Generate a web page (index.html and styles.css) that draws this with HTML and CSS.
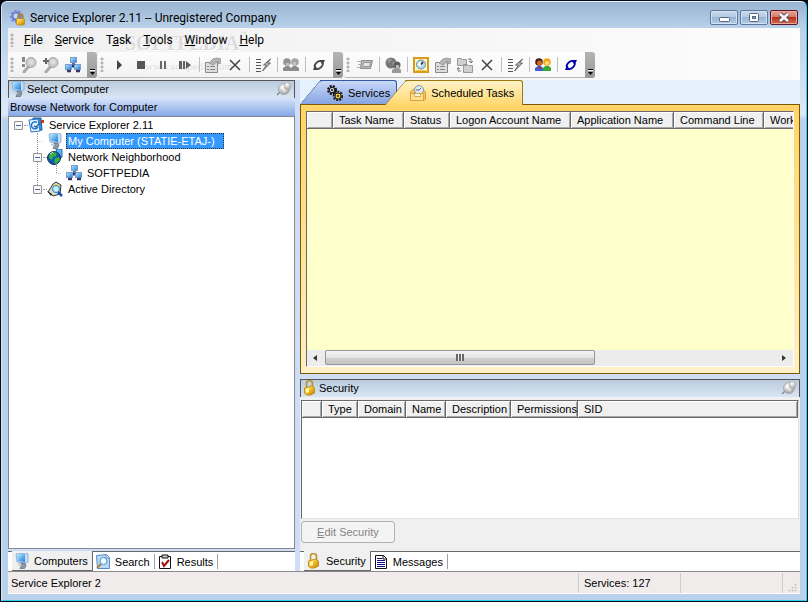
FILE: index.html
```
<!DOCTYPE html>
<html lang="en">
<head>
	<meta charset="utf-8">
	<title>Service Explorer 2.11 -- Unregistered Company</title>
	<link rel="stylesheet" href="styles.css">
</head>
<body>
<!-- icon sprite -->
<svg class="sprite" aria-hidden="true">
	<defs>
		<linearGradient id="gold" x1="0" y1="0" x2="1" y2="1"><stop offset="0" stop-color="#fff3a0"/><stop offset="0.5" stop-color="#f0bc28"/><stop offset="1" stop-color="#b87a08"/></linearGradient>
		<linearGradient id="screen" x1="0" y1="0" x2="1" y2="1"><stop offset="0" stop-color="#b8ecff"/><stop offset="1" stop-color="#1c7ce0"/></linearGradient>
		<radialGradient id="silver" cx="0.4" cy="0.3" r="0.7"><stop offset="0" stop-color="#fff"/><stop offset="1" stop-color="#a4a4a4"/></radialGradient>
	</defs>
	<symbol id="i-app" viewBox="0 0 16 16">
		<circle cx="6.500" cy="6.500" r="5" fill="#6c7cd0" stroke="#7484d4" stroke-width="3" stroke-dasharray="2 1.500"/><circle cx="6" cy="6" r="2.500" fill="#c9d4f5"/>
		<path d="M8 9V6.500a2.500 2.500 0 0 1 5 0V9" fill="none" stroke="#b08820" stroke-width="1.500"/><rect x="6.500" y="8.500" width="8" height="6.500" rx="1.500" fill="url(#gold)" stroke="#c09020"/>
	</symbol>
	<symbol id="i-computer" viewBox="0 0 16 16">
		<path d="M2 1l10-1 2 1v8l-3 1.500L3 9z" fill="#c5dcf4" stroke="#7fa4d0" stroke-width=".8"/><path d="M3 1.500l8-.5v8L4 8z" fill="url(#screen)"/><path d="M7 10h4l1 3-2 3H6l1-3z" fill="#8c97a5" stroke="#5d6b80" stroke-width=".7"/><path d="M4 10.500l4 1-1 2-3-1z" fill="#c7d0da"/>
	</symbol>
	<symbol id="i-network" viewBox="0 0 16 16">
		<path d="M8 5v4M4 11l4-2 4 2" stroke="#263a78" stroke-width="2" fill="none"/>
		<rect x="5.500" y=".5" width="6" height="5" fill="url(#screen)" stroke="#7f9cc4"/><rect x=".5" y="7.500" width="6" height="5" fill="url(#screen)" stroke="#7f9cc4"/><rect x="9.500" y="7.500" width="6" height="5" fill="url(#screen)" stroke="#7f9cc4"/>
		<path d="M2 14h4M11 14h4" stroke="#3b3468" stroke-width="2.500"/><path d="M7 6h3v2H7z" fill="#5c6cb0"/>
	</symbol>
	<symbol id="i-book" viewBox="0 0 16 16">
		<path d="M5 1h8l1 12-8 1z" fill="#2f8fe0" stroke="#1b5ba8"/><path d="M1 3l9-1 2 12-9 1z" fill="#e8f4ff" stroke="#2878c8"/><path d="M9 5.500a3.500 3.500 0 1 0 1 4.500" fill="none" stroke="#1c74d0" stroke-width="1.500"/><path d="M6 9l2 1 6-6" fill="none" stroke="#2c6cb0" stroke-width="1.500"/><path d="M13 3h3v3h-3z" fill="#d03818"/>
	</symbol>
	<symbol id="i-globe" viewBox="0 0 16 16">
		<path d="M9 0h6v8l-4 3z" fill="#58b4f4" stroke="#2c6ca8"/><circle cx="7" cy="9" r="6.500" fill="#1557a8" stroke="#0c2f66"/><path d="M2 6l4-3 4 1-1 3-3 1-1 3-3-2zM8 9l4-1 1 3-4 4-2-2z" fill="#35b045"/><path d="M3 5l3-2" stroke="#c8f4d0"/>
	</symbol>
	<symbol id="i-directory" viewBox="0 0 16 16">
		<path d="M1 11l5-8 3-2 5 3-1 9-7 2z" fill="#d8d8cc" stroke="#333"/><path d="M6 4l5-1 2 2-6 2z" fill="#f2d34d"/><path d="M0 10l5 3-1 2z" fill="#222"/><circle cx="9" cy="8" r="3.500" fill="#c9f0ff" stroke="#2280b8"/><path d="M11 11l4 4" stroke="#1c4fb0" stroke-width="2.500"/>
	</symbol>
	<symbol id="i-find" viewBox="0 0 16 16">
		<path d="M8 9l-5 6" stroke="#aaa" stroke-width="3" stroke-linecap="round"/><circle cx="10" cy="5.500" r="5" fill="#c9c9c9" stroke="#a4a4a4"/><circle cx="10" cy="5" r="2.500" fill="#dedede"/><path d="M2.500 0v5M2.500 7v3" stroke="#8a8a8a" stroke-width="3"/>
	</symbol>
	<symbol id="i-findadd" viewBox="0 0 16 16">
		<path d="M8 9l-5 6" stroke="#aaa" stroke-width="3" stroke-linecap="round"/><circle cx="10" cy="5.500" r="5" fill="#c9c9c9" stroke="#a4a4a4"/><circle cx="10" cy="5" r="2.500" fill="#dedede"/><path d="M0 4h6M3 1v6" stroke="#666" stroke-width="2"/>
	</symbol>
	<symbol id="i-play" viewBox="0 0 16 16"><path d="M6 3l5 5-5 5z" fill="#444"/></symbol>
	<symbol id="i-stop" viewBox="0 0 16 16"><path d="M4 4h8v8H4z" fill="#555"/></symbol>
	<symbol id="i-pause" viewBox="0 0 16 16"><path d="M5 4h2v8H5zM9 4h2v8H9z" fill="#686868"/></symbol>
	<symbol id="i-step" viewBox="0 0 16 16"><path d="M2 4h3v8H2zM6 4h2v8H6zM9 4l5 4-5 4z" fill="#606060"/></symbol>
	<symbol id="i-props" viewBox="0 0 16 16">
		<path d="M.5 5.500h12v10H.5z" fill="#dedede" stroke="#8a8a8a"/><path d="M2 9.500h2M5 9.500h5M2 12.500h2M5 12.500h5" stroke="#888"/><path d="M4 6l4-4 4-1 4 1v4l-3 1V4L8 8z" fill="#b4b4b4" stroke="#909090" stroke-width=".8"/>
	</symbol>
	<symbol id="i-delete" viewBox="0 0 16 16"><path d="M3 3l10 10M13 3L3 13" stroke="#444" stroke-width="1.500"/></symbol>
	<symbol id="i-bolt" viewBox="0 0 16 16">
		<path d="M1 2.500h5M1 5.500h5M1 8.500h5M1 11.500h5M1 14.500h5" stroke="#555"/><path d="M15.500 2l-7 6h3l-4 6 8-8h-3z" fill="#bbb" stroke="#666"/>
	</symbol>
	<symbol id="i-users-off" viewBox="0 0 16 16">
		<circle cx="4" cy="5" r="3.800" fill="#929292"/><circle cx="12" cy="5" r="3.800" fill="#a4a4a4"/><path d="M0 14v-3l3-2h3l2 2 2-2h3l3 2v3z" fill="#8c8c8c"/><path d="M3 6h3v3H3zM10 5h3v3h-3z" fill="#c0c0c0"/>
	</symbol>
	<symbol id="i-users" viewBox="0 0 16 16">
		<circle cx="4" cy="5" r="3.800" fill="#442018"/><circle cx="4.500" cy="6" r="2.500" fill="#d86820"/><circle cx="12" cy="5" r="3.800" fill="#f0a818"/><circle cx="12" cy="6" r="2" fill="#ffdc80"/><path d="M0 14v-3l3-2h3l2 2v3z" fill="#3864d8"/><path d="M8 14v-3l2-2h4l2 2v3z" fill="#38a830"/><path d="M3 10h3l-1 3z" fill="#d02020"/>
	</symbol>
	<symbol id="i-refresh" viewBox="0 0 16 16">
		<path d="M4 10.500c-1.500-3 3-7 6-6.500M11.500 5.500c1.500 3-3 7-6 6.500" fill="none" stroke="currentColor" stroke-width="1.800"/><path d="M8.500 3H14l-2.500 5zM7 13H2l2-5z" fill="currentColor"/><path d="M6 9.500l3.500-3" stroke="#fff"/>
	</symbol>
	<symbol id="i-run" viewBox="0 0 16 16">
		<path d="M4.500 3.500h11l-2 8h-10z" fill="#bbb" stroke="#8c8c8c"/><path d="M6.500 5.500h7l-1 4h-7z" fill="#e4e4e4" stroke="#999"/><path d="M0 4.500h4M1 7.500h3M0 10.500h3" stroke="#b0b0b0"/>
	</symbol>
	<symbol id="i-world-off" viewBox="0 0 16 16">
		<circle cx="6" cy="6" r="5.500" fill="#777"/><path d="M2 4l3-3 2 2-3 3zM7 6l3-2 1 3-3 2z" fill="#999"/><circle cx="12" cy="8" r="3.500" fill="#606060"/><path d="M7 16v-3l3-2h4l2 2v3z" fill="#999"/><path d="M11 8h3v3h-3z" fill="#bbb"/>
	</symbol>
	<symbol id="i-schedule" viewBox="0 0 16 16">
		<rect x="1" y="1" width="14" height="14" fill="#fff8cc" stroke="#d89c18" stroke-width="2"/><circle cx="8" cy="7.500" r="4.500" fill="#b8dcec" stroke="#6c8ca4"/><circle cx="7" cy="7" r="2" fill="#fff"/><path d="M8 7.500l2-2.500" stroke="#223" stroke-width="1.500"/><path d="M3 13.500h10" stroke="#f4ca48"/>
	</symbol>
	<symbol id="i-copy-off" viewBox="0 0 16 16">
		<path d="M.5 1.500h4l1 1h4v6h-9zM6.500 7.500h4l1 1h4v7h-9z" fill="#d0d0d0" stroke="#999"/><path d="M11 2h3v3M12 4l2 2 2-2M4 14h-3v-3M0 12l1-1.500 2 1.500" fill="none" stroke="#777"/>
	</symbol>
	<symbol id="i-gears" viewBox="0 0 16 16">
		<circle cx="5" cy="5" r="3.500" fill="none" stroke="#111" stroke-width="3" stroke-dasharray="1.800 1"/><circle cx="5" cy="5" r="2.800" fill="#ccc" stroke="#111"/><circle cx="5" cy="5" r="1" fill="#111"/><circle cx="11" cy="11" r="3.800" fill="none" stroke="#222" stroke-width="3" stroke-dasharray="1.800 1"/><circle cx="11" cy="11" r="3" fill="#f0cc30" stroke="#222"/><circle cx="11" cy="11" r="1" fill="#222"/>
	</symbol>
	<symbol id="i-task" viewBox="0 0 16 16">
		<path d="M.5 7l3-3h9l3 3v7l-2 1.500H.5z" fill="#f6c450" stroke="#d89c38"/><circle cx="9" cy="5" r="4.500" fill="#dceaf2" stroke="#8098a8"/><path d="M9 5l2-2M9 5H6" stroke="#667"/><path d="M.5 8.500h13v7H.5z" fill="#ffe090" stroke="#d8a040"/><path d="M4.500 8.500h6v3h-6z" fill="#fffbe0" stroke="#c89840" stroke-width=".8"/>
	</symbol>
	<symbol id="i-lock" viewBox="0 0 16 16">
		<path d="M4.500 8V4a3 3 0 0 1 6-1v4" fill="none" stroke="#b8942c" stroke-width="1.600"/><path d="M2.500 8l7-2 3 2v5l-4 2h-4l-2-2z" fill="url(#gold)" stroke="#c48e1c"/><path d="M4 9l3-1v4l-3 1z" fill="#fff4a8"/>
	</symbol>
	<symbol id="i-pin" viewBox="0 0 16 16">
		<path d="M5 10l-4 4" stroke="#888" stroke-width="1.500"/><circle cx="8" cy="8" r="5.500" fill="url(#silver)" stroke="#a0a0a0" stroke-width=".8"/><circle cx="11.500" cy="5" r="3.500" fill="url(#silver)" stroke="#b0b0b0" stroke-width=".6"/><path d="M5 7c2 0 4 1 4 4" stroke="#fff" fill="none"/>
	</symbol>
	<symbol id="i-search" viewBox="0 0 16 16">
		<path d="M1.500 1.500l10-1 3 3v11h-12z" fill="#b8d8f6" stroke="#5c8cc0"/><path d="M11 1v3h3" fill="#fff" stroke="#5c8cc0"/><circle cx="8.500" cy="7" r="3.500" fill="#f2fbff" stroke="#4895d0"/><path d="M6 10l-4 4" stroke="#a88440" stroke-width="2"/>
	</symbol>
	<symbol id="i-results" viewBox="0 0 16 16">
		<path d="M2.500 2.500h11v12h-11z" fill="#fff" stroke="#111"/><path d="M5 1h6v3H5z" fill="#ccc" stroke="#111"/><path d="M5 8l2 4 5-6" fill="none" stroke="#a01010" stroke-width="2"/>
	</symbol>
	<symbol id="i-messages" viewBox="0 0 16 16">
		<path d="M2.500 1.500h8l3 3v10h-11z" fill="#fff" stroke="#111"/><path d="M10 1v4h4" fill="none" stroke="#111"/><path d="M4 4.500h5M4 6.500h8M4 8.500h8M4 10.500h8M4 12.500h8" stroke="#101090"/>
	</symbol>
</svg>

<div class="window">
	<header class="titlebar">
		<svg class="icon"><use href="#i-app"/></svg>
		<h1>Service Explorer 2.11 -- Unregistered Company</h1>
		<div class="captions">
			<button class="caption" aria-label="Minimize"><svg viewBox="0 0 26 13"><rect x="8.500" y="6.500" width="10" height="4" rx="1" fill="#fff" stroke="#56657c"/></svg></button>
			<button class="caption" aria-label="Maximize"><svg viewBox="0 0 26 13"><rect x="8.500" y="2.500" width="9" height="8" rx="1" fill="#fff" stroke="#56657c"/><rect x="11.500" y="5.500" width="3" height="2" fill="#8ea9c8" stroke="#56657c"/></svg></button>
			<button class="caption close" aria-label="Close"><svg viewBox="0 0 26 13"><path d="M9 3l8 7M17 3l-8 7" stroke="#5b4a58" stroke-width="4.500"/><path d="M9 3l8 7M17 3l-8 7" stroke="#fff" stroke-width="2.600"/></svg></button>
		</div>
	</header>

	<div class="bars">
		<div class="watermark" aria-hidden="true"><b>SOFTPEDIA<sup>™</sup></b><span>www.softpedia.com</span></div>
		<nav class="menu">
			<i class="grip"></i>
			<button><u>F</u>ile</button>
			<button><u>S</u>ervice</button>
			<button>T<u>a</u>sk</button>
			<button><u>T</u>ools</button>
			<button><u>W</u>indow</button>
			<button><u>H</u>elp</button>
		</nav>
		<div class="toolbars">
			<div class="toolbar">
				<i class="grip"></i>
				<button class="tool" aria-label="Find"><svg class="icon"><use href="#i-find"/></svg></button>
				<button class="tool" aria-label="Add"><svg class="icon"><use href="#i-findadd"/></svg></button>
				<button class="tool" aria-label="Network"><svg class="icon"><use href="#i-network"/></svg></button>
				<button class="more" aria-label="More"></button>
			</div>
			<div class="toolbar">
				<i class="grip"></i>
				<button class="tool" aria-label="Start"><svg class="icon"><use href="#i-play"/></svg></button>
				<button class="tool" aria-label="Stop"><svg class="icon"><use href="#i-stop"/></svg></button>
				<button class="tool" aria-label="Pause"><svg class="icon"><use href="#i-pause"/></svg></button>
				<button class="tool" aria-label="Restart"><svg class="icon"><use href="#i-step"/></svg></button>
				<i class="sep"></i>
				<button class="tool" aria-label="Properties"><svg class="icon"><use href="#i-props"/></svg></button>
				<button class="tool" aria-label="Delete"><svg class="icon"><use href="#i-delete"/></svg></button>
				<i class="sep"></i>
				<button class="tool" aria-label="Actions"><svg class="icon"><use href="#i-bolt"/></svg></button>
				<i class="sep"></i>
				<button class="tool" aria-label="Accounts"><svg class="icon"><use href="#i-users-off"/></svg></button>
				<i class="sep"></i>
				<button class="tool" aria-label="Refresh"><svg class="icon"><use href="#i-refresh"/></svg></button>
				<button class="more" aria-label="More"></button>
			</div>
			<div class="toolbar">
				<i class="grip"></i>
				<button class="tool" aria-label="Run"><svg class="icon"><use href="#i-run"/></svg></button>
				<i class="sep"></i>
				<button class="tool" aria-label="Connect"><svg class="icon"><use href="#i-world-off"/></svg></button>
				<i class="sep"></i>
				<button class="tool" aria-label="Schedule"><svg class="icon"><use href="#i-schedule"/></svg></button>
				<button class="tool" aria-label="Task properties"><svg class="icon"><use href="#i-props"/></svg></button>
				<button class="tool" aria-label="Copy task"><svg class="icon"><use href="#i-copy-off"/></svg></button>
				<button class="tool" aria-label="Delete task"><svg class="icon"><use href="#i-delete"/></svg></button>
				<i class="sep"></i>
				<button class="tool" aria-label="Task actions"><svg class="icon"><use href="#i-bolt"/></svg></button>
				<i class="sep"></i>
				<button class="tool" aria-label="Task accounts"><svg class="icon"><use href="#i-users"/></svg></button>
				<i class="sep"></i>
				<button class="tool blue" aria-label="Refresh tasks"><svg class="icon"><use href="#i-refresh"/></svg></button>
				<button class="more" aria-label="More"></button>
			</div>
		</div>
	</div>

	<main class="workspace">
		<section class="side">
			<div class="pane-head">
				<svg class="icon"><use href="#i-computer"/></svg>
				<h2>Select Computer</h2>
				<button class="pin" aria-label="Pin"><svg class="icon"><use href="#i-pin"/></svg></button>
			</div>
			<div class="pane-sub">Browse Network for Computer</div>
			<ul class="tree">
				<li>
					<div class="node"><button class="toggle" aria-label="Collapse"></button><svg class="icon"><use href="#i-book"/></svg><span>Service Explorer 2.11</span></div>
					<ul>
						<li><div class="node selected"><i class="stub"></i><svg class="icon"><use href="#i-computer"/></svg><span>My Computer (STATIE-ETAJ-)</span></div></li>
						<li>
							<div class="node"><button class="toggle" aria-label="Collapse"></button><svg class="icon"><use href="#i-globe"/></svg><span>Network Neighborhood</span></div>
							<ul>
								<li><div class="node"><i class="stub"></i><svg class="icon"><use href="#i-network"/></svg><span>SOFTPEDIA</span></div></li>
							</ul>
						</li>
						<li><div class="node"><button class="toggle" aria-label="Collapse"></button><svg class="icon"><use href="#i-directory"/></svg><span>Active Directory</span></div></li>
					</ul>
				</li>
			</ul>
			<div class="foot-tabs">
				<button class="foot-tab active"><svg class="icon"><use href="#i-computer"/></svg>Computers</button>
				<button class="foot-tab"><svg class="icon"><use href="#i-search"/></svg>Search</button>
				<button class="foot-tab"><svg class="icon"><use href="#i-results"/></svg>Results</button>
			</div>
		</section>

		<section class="content">
			<div class="tabs">
				<button class="tab"><svg class="icon"><use href="#i-gears"/></svg>Services</button>
				<button class="tab active"><svg class="icon"><use href="#i-task"/></svg>Scheduled Tasks</button>
			</div>
			<div class="task-panel">
				<div class="task-list">
					<div class="task-view">
						<table class="grid tasks">
							<thead>
								<tr><th class="w26"></th><th class="w71">Task Name</th><th class="w46">Status</th><th class="w121">Logon Account Name</th><th class="w103">Application Name</th><th class="w90">Command Line</th><th class="w121">Working Directory</th></tr>
							</thead>
						</table>
					</div>
					<div class="scrollbar">
						<button class="arrow left" aria-label="Scroll left"></button>
						<div class="track"><div class="thumb"></div></div>
						<button class="arrow right" aria-label="Scroll right"></button>
					</div>
				</div>
			</div>

			<div class="security">
				<div class="pane-head">
					<svg class="icon"><use href="#i-lock"/></svg>
					<h2>Security</h2>
					<button class="pin" aria-label="Pin"><svg class="icon"><use href="#i-pin"/></svg></button>
				</div>
				<div class="acl">
					<table class="grid">
						<thead>
							<tr><th class="w20"></th><th class="w36">Type</th><th class="w48">Domain</th><th class="w40">Name</th><th class="w65">Description</th><th class="w67">Permissions</th><th>SID</th></tr>
						</thead>
					</table>
				</div>
				<div class="actions"><button class="edit" disabled><u>E</u>dit Security</button></div>
				<div class="foot-tabs">
					<button class="foot-tab active"><svg class="icon"><use href="#i-lock"/></svg>Security</button>
					<button class="foot-tab"><svg class="icon"><use href="#i-messages"/></svg>Messages</button>
				</div>
			</div>
		</section>
	</main>

	<footer class="status">
		<span class="grow">Service Explorer 2</span>
		<span class="panel">Services: 127</span>
		<span class="panel"></span>
		<span class="corner"><svg viewBox="0 0 12 12"><path d="M9 1h2v2H9zM5 5h2v2H5zM9 5h2v2H9zM1 9h2v2H1zM5 9h2v2H5zM9 9h2v2H9z" fill="#b8b8b8"/></svg></span>
	</footer>
</div>
</body>
</html>
```
FILE: styles.css
```
*{
	box-sizing: border-box;
}
html, body{
	height: 100%;
}
body{
	margin: 0;
	background: #0a0a14;
	font: 11px/16px "Liberation Sans", Arial, sans-serif;
	color: #000;
}
button{
	margin: 0;
	padding: 0;
	border: 0;
	background: none;
	font: inherit;
	color: inherit;
}
h1, h2{
	margin: 0;
	font: inherit;
}
ul{
	margin: 0;
	padding: 0;
	list-style: none;
}
.sprite{
	position: absolute;
	width: 0;
	height: 0;
}
.icon{
	display: block;
	flex: none;
	width: 16px;
	height: 16px;
}

/* window frame */
.window{
	display: flex;
	flex-direction: column;
	height: calc(100% - 2px);
	margin: 1px;
	padding: 0 6px 6px;
	border: 1px solid #2cd0f0;
	border-top-color: #e8f4ff;
	border-left-color: #d5e6f6;
	border-radius: 6px 6px 0 0;
	background: linear-gradient(#99b4d1, #b9d1ea 26px, #dce9f7 112px, #b9d1ea 118px);
}
.titlebar{
	display: flex;
	align-items: center;
	height: 26px;
	padding: 5px 2px 0;
	font: 12px/20px Roboto, "Noto Sans", sans-serif;
}
.titlebar h1{
	flex: 1;
	margin-left: 4px;
	white-space: nowrap;
}
.captions{
	display: flex;
	gap: 2px;
}
.caption{
	width: 28px;
	height: 15px;
	border: 1px solid #60769a;
	border-radius: 2px;
	background: linear-gradient(#c9dbee, #b2c9e2 50%, #98b5d5 50%, #b4cfea);
	box-shadow: inset 0 0 0 1px #d3e3f3;
}
.caption svg{
	display: block;
	width: 26px;
	height: 13px;
}
.caption.close{
	border-color: #5a1a2c;
	background: linear-gradient(#e5a59b, #d4796a 50%, #b8331d 50%, #d06c50);
	box-shadow: inset 0 0 0 1px #e8a99c;
}

/* menu and toolbars */
.bars{
	position: relative;
	isolation: isolate;
	height: 52px;
	background: linear-gradient(90deg, #f0f0f0, #fcfcfc);
}
.watermark{
	position: absolute;
	z-index: -1;
	top: 3px;
	left: 117px;
	color: #dcdcdc;
	font: 20px/24px "Liberation Serif", serif;
	text-shadow: 1px 1px #fff;
}
.watermark b{
	display: block;
}
.watermark sup{
	font-size: 8px;
	line-height: 8px;
	vertical-align: top;
}
.watermark span{
	display: block;
	padding-left: 20px;
	color: #cecece;
	font: 11px/22px "Liberation Serif", serif;
}
.menu{
	display: flex;
	height: 24px;
	font: 12px/24px Roboto, "Noto Sans", sans-serif;
}
.menu button{
	padding: 0 6px;
}
.grip{
	flex: none;
	width: 10px;
	margin: 5px 0;
	background: radial-gradient(circle at 4px 2px, #b4b4b4 1px, transparent 2px) 0 0 / 10px 4px repeat-y;
}
.toolbars{
	display: flex;
	gap: 1px;
}
.toolbar{
	display: flex;
	height: 26px;
	border-bottom: 1px solid #b8b8b8;
	border-radius: 3px;
	background: linear-gradient(rgba(255, 255, 255, .8), rgba(250, 250, 250, 0));
}
.tool{
	display: flex;
	align-items: center;
	justify-content: center;
	width: 22px;
	color: #444;
}
.blue{
	color: #0000b0;
}
.sep{
	width: 1px;
	margin: 5px 2px 5px 3px;
	background: #bebebe;
}
.more{
	position: relative;
	width: 10px;
	height: 26px;
	margin-left: 3px;
	border-radius: 0 3px 3px 0;
	background: linear-gradient(#b4b4b4, #989898);
}
.more:before, .more:after{
	content: '';
	position: absolute;
	left: 3px;
	top: 17px;
	width: 5px;
	height: 1px;
	background: #000;
	box-shadow: 0 1px #fff;
}
.more:after{
	top: 20px;
	height: 3px;
	clip-path: polygon(0 0, 100% 0, 50% 100%);
	box-shadow: none;
}

/* workspace */
.workspace{
	display: flex;
	flex: 1;
	min-height: 0;
	gap: 5px;
	background: #d0def5;
}
.side{
	display: flex;
	flex-direction: column;
	width: 287px;
}
.content{
	display: flex;
	flex: 1;
	flex-direction: column;
	min-width: 0;
}
.pane-head{
	display: flex;
	align-items: center;
	height: 18px;
	padding: 0 2px 1px;
	border: 1px solid #555;
	border-bottom: 0;
	background: linear-gradient(#b9cbdc, #d9e6f4);
}
.side .pane-head .icon:first-child, .security .pane-head .icon:first-child{
	margin-left: -1px;
}
.pane-head h2{
	flex: 1;
	margin-left: 1px;
}
.pane-sub{
	height: 18px;
	padding: 1px 2px;
	background: linear-gradient(#d6e3fb, #86a8e6);
}

/* tree */
.tree{
	flex: 1;
	margin-bottom: 2px;
	padding-left: 5px;
	border: 1px solid #828790;
	background: #fff;
}
.tree ul{
	position: relative;
	padding-left: 19px;
}
.tree ul:before{
	content: '';
	position: absolute;
	left: 23px;
	top: 0;
	bottom: 8px;
	border-left: 1px dotted #999;
}
.node{
	display: flex;
	align-items: center;
	height: 16px;
}
.node .icon{
	margin-left: 5px;
}
.node span{
	margin-left: 3px;
	padding: 0 2px;
	white-space: nowrap;
}
.node.selected span{
	padding: 0 8px 0 1px;
	border: 1px dotted #333;
	background: #3399ff;
	color: #fff;
	line-height: 14px;
}
.toggle{
	position: relative;
	width: 9px;
	height: 9px;
	border: 1px solid #919191;
	border-radius: 1px;
	background: linear-gradient(#4b63a7, #4b63a7) 1px 3px / 5px 1px no-repeat, #f8f8f8;
}
.toggle:after{
	content: '';
	position: absolute;
	left: 9px;
	top: 3px;
	width: 4px;
	border-top: 1px dotted #999;
}
.stub{
	width: 9px;
	border-top: 1px dotted #999;
	clip-path: inset(0 0 0 4px);
}

/* bottom tabs */
.foot-tabs{
	display: flex;
	height: 20px;
	padding-left: 4px;
	border-top: 1px solid #696969;
	background: #fff;
}
.foot-tab{
	display: flex;
	align-items: center;
	gap: 4px;
	margin: 2px 0;
	padding: 0 4px 0 2px;
	border-right: 1px solid #a0a0a0;
}
.foot-tab.active{
	margin: -1px 0 0;
	border-right-color: #696969;
	border-bottom: 1px solid #696969;
	background: #f0f0f0;
}

/* slanted tabs, the left edge is a skewed block */
.tabs{
	display: flex;
	height: 24px;
	padding-left: 20px;
	background: #e6f1fe;
}
.tab{
	position: relative;
	isolation: isolate;
	display: flex;
	align-items: center;
	gap: 5px;
	padding: 0 6px 0 7px;
	border: 1px solid #3558a0;
	border-width: 1px 1px 0 0;
	border-top-right-radius: 3px;
	background: linear-gradient(#c8d8f8, #86a4e2);
}
.tab:before{
	content: '';
	position: absolute;
	z-index: -1;
	left: -10px;
	top: -1px;
	bottom: 0;
	width: 24px;
	border: 1px solid #3558a0;
	border-width: 1px 0 0 1px;
	border-top-left-radius: 3px;
	background: inherit;
	transform: skewX(-40deg);
}
.tab.active{
	margin: 0 0 -1px 8px;
	padding: 0 8px 0 5px;
	border-color: #a07810;
	background: linear-gradient(#fff1c8, #ffd86e);
}
.tab.active:before{
	border-color: #a07810;
}
.task-panel{
	display: flex;
	flex: 1;
	min-height: 0;
	padding: 6px 5px;
	border: 1px solid #7d5a00;
	background: linear-gradient(#ffd468, #fff0c8);
}
.task-list{
	display: flex;
	flex: 1;
	flex-direction: column;
	min-width: 0;
	border: 1px solid #696969;
	border-right-color: #fff;
	border-bottom-color: #fff;
}
.task-view{
	flex: 1;
	overflow: hidden;
	background: #ffffcc;
}

/* list headers */
.grid{
	width: 100%;
	border-collapse: separate;
	border-spacing: 0;
	table-layout: fixed;
}
.grid.tasks{
	width: 578px;
}
.grid th{
	height: 17px;
	padding: 0 0 0 6px;
	border: 1px solid #696969;
	border-width: 0 1px 1px 0;
	background: #f0f0f0;
	box-shadow: inset 1px 1px #fff, inset -1px -1px #a8a8a8;
	font-weight: normal;
	line-height: 14px;
	text-align: left;
	white-space: nowrap;
}
.w20{ width: 20px; }
.w26{ width: 26px; }
.w36{ width: 36px; }
.w40{ width: 40px; }
.w46{ width: 46px; }
.w48{ width: 48px; }
.w65{ width: 65px; }
.w67{ width: 67px; }
.w71{ width: 71px; }
.w90{ width: 90px; }
.w103{ width: 103px; }
.w121{ width: 121px; }

.scrollbar{
	display: flex;
	height: 16px;
	background: #ececec;
}
.arrow{
	position: relative;
	width: 18px;
}
.arrow:after{
	content: '';
	position: absolute;
	left: 7px;
	top: 5px;
	border: 3px solid transparent;
}
.arrow.left:after{
	left: 3px;
	border-right: 4px solid #333;
}
.arrow.right:after{
	border-left: 4px solid #333;
}
.track{
	flex: 1;
}
.thumb{
	width: 60%;
	height: 15px;
	border: 1px solid #979797;
	border-radius: 2px;
	background:
		repeating-linear-gradient(90deg, #666 0 2px, #eee 2px 3px) center / 8px 7px no-repeat,
		linear-gradient(#f4f4f4, #e4e4e4 50%, #d0d0d0 50%, #c4c4c4);
}

/* security */
.security{
	padding-top: 5px;
	background: #f0f0f0;
	box-shadow: inset 0 5px #d0def5;
}
.acl{
	height: 119px;
	margin: 3px 1px 0;
	border: 1px solid #696969;
	border-right-color: #e3e3e3;
	border-bottom-color: #e3e3e3;
	background: #fff;
}
.actions{
	padding: 2px 1px 8px;
}
.edit{
	display: block;
	width: 94px;
	height: 22px;
	border: 1px solid #adb2b5;
	border-radius: 3px;
	background: #f4f4f4;
	color: #838383;
}

/* status bar */
.status{
	display: flex;
	height: 23px;
	padding: 1px 0 0 3px;
	border-top: 1px solid #8a8a8a;
	border-bottom: 1px solid #fff;
	background: #f0ecec;
	line-height: 21px;
}
.grow{
	flex: 1;
}
.panel{
	width: 102px;
	padding-left: 5px;
	border-left: 1px solid #d0cccc;
}
.corner{
	display: flex;
	align-items: flex-end;
	justify-content: flex-end;
	width: 18px;
	padding: 0 3px 1px 0;
	border-left: 1px solid #d0cccc;
}
.corner svg{
	width: 9px;
	height: 9px;
}
```
